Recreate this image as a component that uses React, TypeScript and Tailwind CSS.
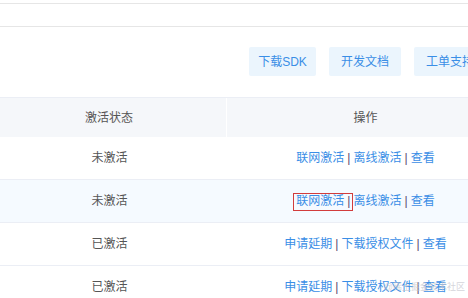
import React from "react";

const font = { fontFamily: '"Liberation Sans", "Noto Sans CJK SC", sans-serif' };

function Sep() {
  return <span className="mx-[3px] text-[#5a4a6e]">|</span>;
}

function Links({ items }: { items: string[] }) {
  return (
    <div className="flex items-center text-[12px] text-[#3a8ee6]">
      {items.map((t, i) => (
        <React.Fragment key={t + i}>
          {i > 0 && <Sep />}
          <span>{t}</span>
        </React.Fragment>
      ))}
    </div>
  );
}

function Row({ status, links, hover }: { status: string; links: string[]; hover?: boolean }) {
  return (
    <div className={`flex h-[43px] border-b border-[#ebeef5] ${hover ? "bg-[#f5faff]" : "bg-white"}`}>
      <div className="w-[227px] shrink-0 flex items-center justify-center pr-[8px] text-[12px] text-[#555]">{status}</div>
      <div className="w-[277px] shrink-0 flex items-center justify-center">
        <Links items={links} />
      </div>
    </div>
  );
}

export default function App() {
  return (
    <div className="relative w-[468px] h-[298px] overflow-hidden bg-white" style={font}>
      <div className="mt-[3px] h-[24px] border-y border-[#e6e6e6]" />
      <div className="w-[560px] h-[70px] flex items-start gap-[13px] pl-[249px] pt-[20px] whitespace-nowrap">
        <div className="h-[29px] w-[67px] shrink-0 flex items-center justify-center bg-[#ebf5fd] text-[12px] text-[#3a8ee6] rounded-[2px]">下载SDK</div>
        <div className="h-[29px] w-[72px] shrink-0 flex items-center justify-center bg-[#ebf5fd] text-[12px] text-[#3a8ee6] rounded-[2px]">开发文档</div>
        <div className="h-[29px] w-[72px] shrink-0 flex items-center justify-center bg-[#ebf5fd] text-[12px] text-[#3a8ee6] rounded-[2px]">工单支持</div>
      </div>
      <div className="w-[504px] border-t border-[#ebeef5]">
        <div className="flex h-[39px] bg-[#f5f7fa]">
          <div className="w-[227px] shrink-0 flex items-center justify-center pr-[8px] border-r border-white text-[12px] text-[#555]">激活状态</div>
          <div className="w-[277px] shrink-0 flex items-center justify-center text-[12px] text-[#555]">操作</div>
        </div>
        <Row status="未激活" links={["联网激活", "离线激活", "查看"]} />
        <Row status="未激活" links={["联网激活", "离线激活", "查看"]} hover />
        <Row status="已激活" links={["申请延期", "下载授权文件", "查看"]} />
        <Row status="已激活" links={["申请延期", "下载授权文件", "查看"]} />
      </div>
      <div className="absolute left-[293px] top-[193px] w-[60px] h-[18px] border border-[#d23c3c]" />
      <div className="absolute right-[3px] top-[281px] text-[9px] leading-[12px] text-[#c4c4cc] opacity-70 whitespace-nowrap">@稀土掘金技术社区</div>
    </div>
  );
}
